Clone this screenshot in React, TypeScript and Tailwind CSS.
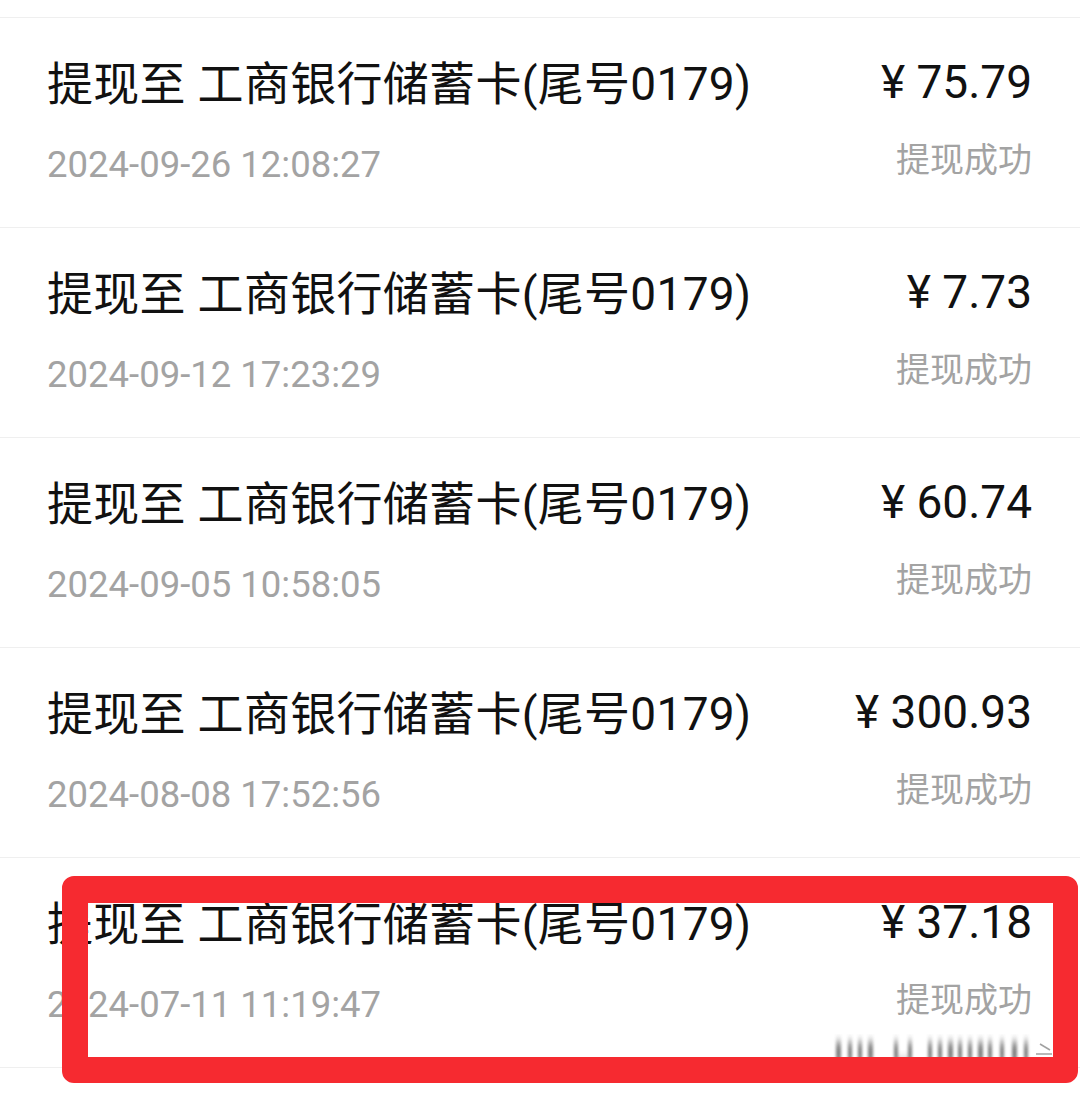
import React from 'react';

interface Record {
  date: string;
  amount: string;
}

const records: Record[] = [
  { date: '2024-09-26 12:08:27', amount: '75.79' },
  { date: '2024-09-12 17:23:29', amount: '7.73' },
  { date: '2024-09-05 10:58:05', amount: '60.74' },
  { date: '2024-08-08 17:52:56', amount: '300.93' },
  { date: '2024-07-11 11:19:47', amount: '37.18' },
];

const font = { fontFamily: 'Roboto, "Noto Sans CJK SC", sans-serif' };

const Row: React.FC<{ r: Record }> = ({ r }) => (
  <div className="h-[210px] border-t border-[#efefef] pl-[47px] pr-[48px] flex justify-between">
    <div className="flex flex-col">
      <div className="pt-[38px] text-[46px] leading-[56px] text-[#111111] whitespace-nowrap tracking-[0.3px]">
        提现至 工商银行储蓄卡(尾号0179)
      </div>
      <div className="mt-[31px] text-[36.5px] leading-[44px] text-[#a3a3a3] whitespace-nowrap">{r.date}</div>
    </div>
    <div className="flex flex-col items-end">
      <div className="pt-[36px] text-[46px] leading-[56px] text-[#111111] whitespace-nowrap">¥ {r.amount}</div>
      <div className="mt-[28px] text-[34px] leading-[44px] text-[#a3a3a3] whitespace-nowrap">提现成功</div>
    </div>
  </div>
);

const Watermark: React.FC = () => (
  <svg width="230" height="36" viewBox="0 0 230 36" className="absolute left-[828px] top-[1034px]">
    <defs>
      <filter id="wm" x="-10%" y="-40%" width="120%" height="180%">
        <feGaussianBlur stdDeviation="1.6 5" />
      </filter>
    </defs>
    <g filter="url(#wm)" fill="#4a4a4a" opacity="0.7">
      {[8, 20, 30, 40, 100, 110, 120, 130, 140, 150, 160, 172, 184, 196].map((x, i) => (
        <rect key={i} x={x} y={8} width={i % 3 === 0 ? 5 : 4} height={22} />
      ))}
      <rect x={66} y={8} width={4} height={22} />
      <rect x={80} y={8} width={4} height={22} />
      <rect x={66} y={26} width={18} height={4} />
    </g>
    <path d="M212 10 L222 16 M212 26 L222 32 M208 20 L224 20" stroke="#444" strokeWidth="1.5" fill="none" opacity="0.5" />
  </svg>
);

const App: React.FC = () => (
  <div className="relative w-[1080px] h-[1093px] bg-white overflow-hidden" style={font}>
    <div className="h-[17px]" />
    {records.map((r) => (
      <Row key={r.date} r={r} />
    ))}
    <div className="border-t border-[#efefef]" />
    <Watermark />
    <div className="absolute left-[62px] top-[876px] w-[1016px] h-[207px] border-[#f62a30] border-l-[26px] border-t-[27px] border-r-[25px] border-b-[26px] rounded-[12px]" />
  </div>
);

export default App;
